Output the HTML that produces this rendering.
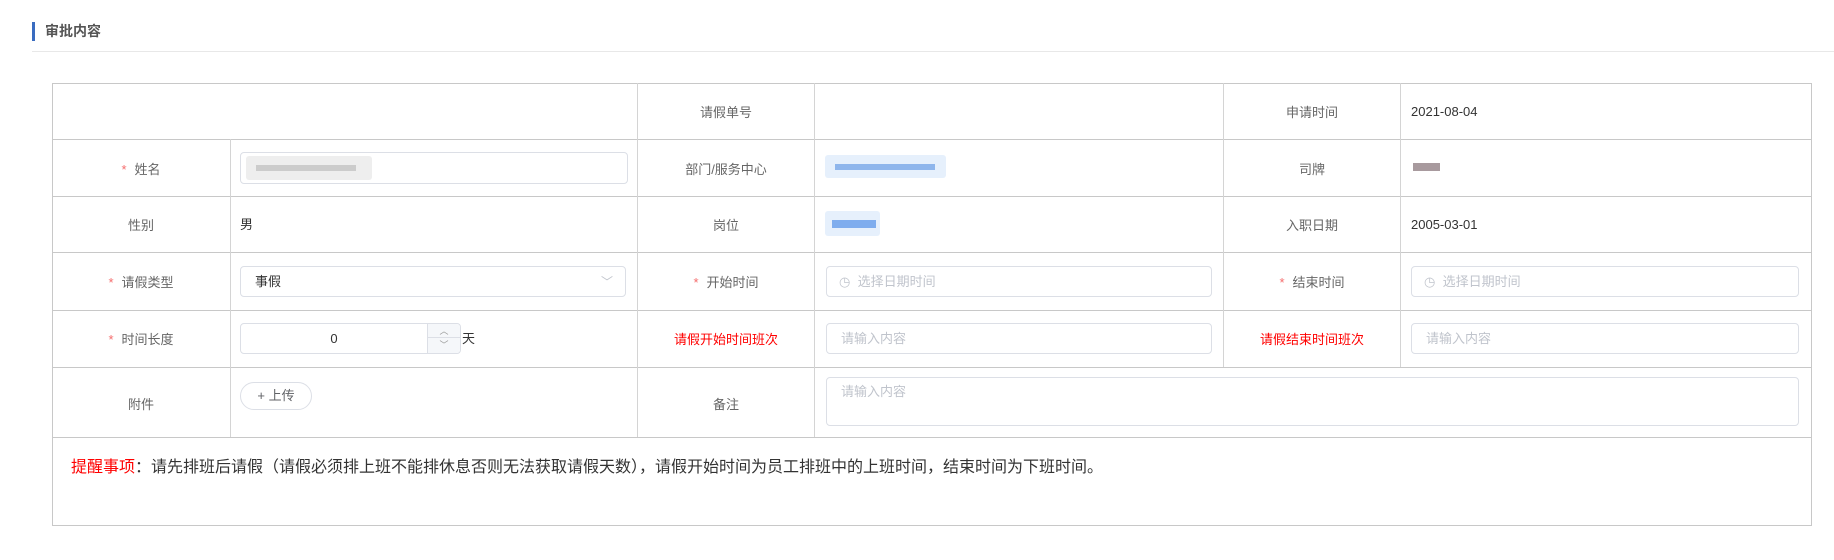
<!DOCTYPE html>
<html><head><meta charset="utf-8"><style>
*{margin:0;padding:0;box-sizing:border-box}
body{width:1834px;height:560px;background:#fff;position:relative;overflow:hidden;font-family:"Liberation Sans","Noto Sans CJK SC",sans-serif;font-size:13px;color:#333}
.a{position:absolute}
.h{background:#c8c8c8}
.v{background:#d4d4d4}
.lb{position:absolute;color:#666;text-align:center;font-size:13px;line-height:14px;height:14px;margin-top:2px}
.st{color:#f56c6c;margin-right:8px}
.in{position:absolute;border:1px solid #dcdfe6;border-radius:4px;background:#fff;color:#c0c4cc;font-size:13px;line-height:14px;padding-left:14px;display:flex;align-items:center}
.val{position:absolute;font-size:13px;color:#333;line-height:14px;margin-top:1px}
</style></head><body>
<div class="a" style="left:32px;top:22px;width:3px;height:19px;background:#3a6cc0"></div>
<div class="a" style="left:45px;top:22px;font-size:14px;font-weight:bold;color:#555;line-height:19px">审批内容</div>
<div class="a" style="left:32px;top:51px;width:1802px;height:1px;background:#e8e8e8"></div>

<div class="a" style="left:52px;top:83px;width:1760px;height:443px;border:1px solid #c8c8c8"></div>
<div class="a h" style="left:52px;top:139px;width:1760px;height:1px"></div>
<div class="a h" style="left:52px;top:196px;width:1760px;height:1px"></div>
<div class="a h" style="left:52px;top:252px;width:1760px;height:1px"></div>
<div class="a h" style="left:52px;top:310px;width:1760px;height:1px"></div>
<div class="a h" style="left:52px;top:367px;width:1760px;height:1px"></div>
<div class="a h" style="left:52px;top:437px;width:1760px;height:1px"></div>
<div class="a v" style="left:230px;top:139px;width:1px;height:298px"></div>
<div class="a v" style="left:637px;top:83px;width:1px;height:354px"></div>
<div class="a v" style="left:814px;top:83px;width:1px;height:354px"></div>
<div class="a v" style="left:1223px;top:83px;width:1px;height:284px"></div>
<div class="a v" style="left:1400px;top:83px;width:1px;height:284px"></div>

<div class="lb" style="left:638px;top:104px;width:176px">请假单号</div>
<div class="lb" style="left:1224px;top:104px;width:176px">申请时间</div>
<div class="val" style="left:1411px;top:104px">2021-08-04</div>

<div class="lb" style="left:52px;top:161px;width:178px"><span class="st">*</span>姓名</div>
<div class="in" style="left:240px;top:152px;width:388px;height:32px"></div>
<div class="a" style="left:246px;top:156px;width:126px;height:24px;background:#eeeeee;border-radius:3px"></div>
<div class="a" style="left:256px;top:165px;width:100px;height:6px;background:#bdbdbd;opacity:.7"></div>
<div class="lb" style="left:638px;top:161px;width:176px">部门/服务中心</div>
<div class="a" style="left:825px;top:155px;width:121px;height:23px;background:#e6f0fc;border-radius:3px"></div>
<div class="a" style="left:835px;top:164px;width:100px;height:6px;background:#8fb6ec"></div>
<div class="lb" style="left:1224px;top:161px;width:176px">司牌</div>
<div class="a" style="left:1413px;top:163px;width:27px;height:8px;background:#a89a9e"></div>

<div class="lb" style="left:52px;top:217px;width:178px">性别</div>
<div class="val" style="left:240px;top:217px">男</div>
<div class="lb" style="left:638px;top:217px;width:176px">岗位</div>
<div class="a" style="left:825px;top:211px;width:55px;height:25px;background:#e6f0fc;border-radius:3px"></div>
<div class="a" style="left:832px;top:220px;width:44px;height:8px;background:#7fadee"></div>
<div class="lb" style="left:1224px;top:217px;width:176px">入职日期</div>
<div class="val" style="left:1411px;top:217px">2005-03-01</div>

<div class="lb" style="left:52px;top:274px;width:178px"><span class="st">*</span>请假类型</div>
<div class="in" style="left:240px;top:266px;width:386px;height:31px;color:#333">事假<span style="position:absolute;right:12px;top:8px;color:#c0c4cc;font-size:12px">﹀</span></div>
<div class="lb" style="left:638px;top:274px;width:176px"><span class="st">*</span>开始时间</div>
<div class="in" style="left:826px;top:266px;width:386px;height:31px;padding-left:12px">◷&nbsp; 选择日期时间</div>
<div class="lb" style="left:1224px;top:274px;width:176px"><span class="st">*</span>结束时间</div>
<div class="in" style="left:1411px;top:266px;width:388px;height:31px;padding-left:12px">◷&nbsp; 选择日期时间</div>

<div class="lb" style="left:52px;top:331px;width:178px"><span class="st">*</span>时间长度</div>
<div class="in" style="left:240px;top:323px;width:221px;height:31px;padding:0;justify-content:center;color:#333"><span style="margin-right:33px">0</span>
<div class="a" style="right:0;top:0;width:33px;height:29px;background:#f5f7fa;border-left:1px solid #dcdfe6;border-radius:0 4px 4px 0"><div style="height:14px;border-bottom:1px solid #dcdfe6;text-align:center;font-size:9px;color:#999;line-height:14px">︿</div><div style="text-align:center;font-size:9px;color:#999;line-height:14px">﹀</div></div></div>
<div class="val" style="left:462px;top:331px">天</div>
<div class="lb" style="left:638px;top:331px;width:176px;color:#f00">请假开始时间班次</div>
<div class="in" style="left:826px;top:323px;width:386px;height:31px">请输入内容</div>
<div class="lb" style="left:1224px;top:331px;width:176px;color:#f00">请假结束时间班次</div>
<div class="in" style="left:1411px;top:323px;width:388px;height:31px">请输入内容</div>

<div class="lb" style="left:52px;top:396px;width:178px">附件</div>
<div class="a" style="left:240px;top:382px;width:72px;height:28px;border:1px solid #dcdfe6;border-radius:14px;font-size:13px;color:#606266;text-align:center;line-height:26px">+ 上传</div>
<div class="lb" style="left:638px;top:396px;width:176px">备注</div>
<div class="in" style="left:826px;top:377px;width:973px;height:49px;align-items:flex-start;padding-top:7px">请输入内容</div>

<div class="a" style="left:71px;top:459px;font-size:16px;line-height:17px;color:#333;white-space:nowrap"><span style="color:#f00">提醒事项</span>：请先排班后请假（请假必须排上班不能排休息否则无法获取请假天数），请假开始时间为员工排班中的上班时间，结束时间为下班时间。</div>
</body></html>
